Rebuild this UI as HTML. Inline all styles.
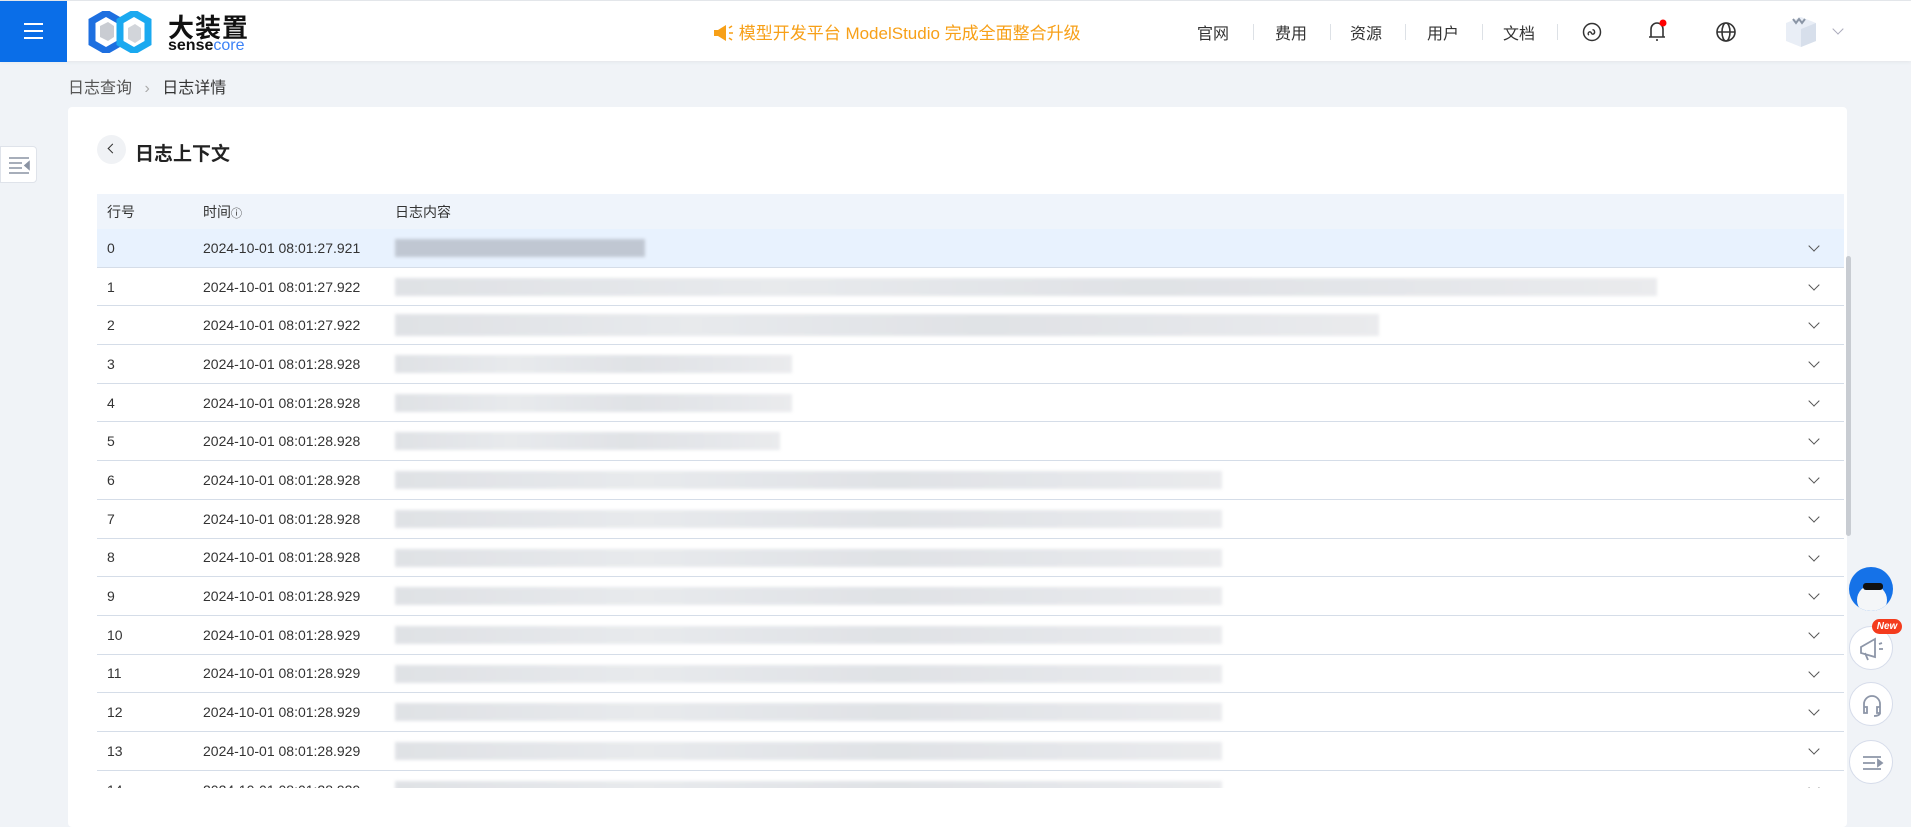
<!DOCTYPE html>
<html><head><meta charset="utf-8"><style>
*{box-sizing:border-box;margin:0;padding:0}
body{width:1911px;height:810px;overflow:hidden;background:#f0f3f7;font-family:"Liberation Sans","Noto Sans CJK SC",sans-serif;color:#333;position:relative}
.hdr{position:absolute;left:0;top:0;width:1911px;height:61px;background:#fff;box-shadow:0 1px 4px rgba(0,0,0,.06);border-top:1px solid #e3e6ea;z-index:2}
.ham{position:absolute;left:0;top:0;width:67px;height:61px;background:#0a6ee8}
.ham i{position:absolute;left:24px;width:19px;height:2px;background:#fff}
.ann{position:absolute;left:712px;top:18px;color:#f7a018;font-size:17px;white-space:nowrap}
.nav{position:absolute;top:19px;font-size:16px;color:#333}
.sep{position:absolute;top:23px;width:1px;height:16px;background:#dde1e6}
.bc{position:absolute;left:68px;top:74px;font-size:16px;color:#555}
.card{position:absolute;left:68px;top:107px;width:1779px;height:720px;background:#fff;border-radius:4px}
.side{position:absolute;left:0;top:146px;width:37px;height:37px;background:#fff;border:1px solid #dfe3ea;border-radius:0 4px 4px 0}
.wrap{position:absolute;left:97px;top:194px;width:1747px;height:594px;overflow:hidden}
.th{height:35px;background:#eff4fb;font-size:14px;color:#333;position:relative}
.row{height:38.7px;border-bottom:1px solid #d5dde8;position:relative;font-size:14px;color:#333}
.c1{position:absolute;left:10px;top:50%;transform:translateY(-50%)}
.c2{position:absolute;left:106px;top:50%;transform:translateY(-50%)}
.c3{position:absolute;left:298px;top:50%;transform:translateY(-50%)}
.bar{position:absolute;left:298px;top:10px;height:18px;background:linear-gradient(90deg,#dcdfe3,#e6e8eb 30%,#dde0e4 60%,#e8e9ec);filter:blur(1.5px);opacity:.9}
.chev{position:absolute;right:26px;top:13px;width:8px;height:8px;border-right:1.3px solid #555;border-bottom:1.3px solid #555;transform:rotate(45deg)}
.fb{position:absolute;left:1849px;width:44px;height:44px;border-radius:50%;border:1px solid #d6dcea;background:#fff}
</style></head><body>
<div class="hdr">
 <div class="ham"><i style="top:22px"></i><i style="top:29px"></i><i style="top:36px"></i></div>
 <svg style="position:absolute;left:88px;top:10px" width="64" height="42" viewBox="0 0 64 42">
  <polygon points="4,10 18,2 32,10 32,32 18,40 4,32" fill="none" stroke="#1d6fe0" stroke-width="7"/>
  <polygon points="32,10 46,2 60,10 60,32 46,40 32,32" fill="none" stroke="#1aa9f0" stroke-width="7"/>
  <polygon points="12,15 20,11 26,15 26,26 20,30 12,26" fill="#c9ccd2"/>
  <polygon points="40,17 47,13 53,17 53,28 47,32 40,28" fill="#d2d5da"/>
 </svg>
 <div style="position:absolute;left:168px;top:7px;font-size:26px;font-weight:bold;color:#111;letter-spacing:1px">大装置</div>
 <div style="position:absolute;left:168px;top:36px;font-size:16px;color:#111;font-weight:bold">sense<span style="color:#3c82f6;font-weight:normal">core</span></div>
 <div class="ann">
  <svg width="22" height="18" viewBox="0 0 22 18" style="vertical-align:-3px"><path d="M2 6h4l8-5v16l-8-5H2z" fill="#f7a018"/><path d="M17 4l3-2M17 9h4M17 14l3 2" stroke="#f7a018" stroke-width="1.6"/></svg>
  模型开发平台 ModelStudio 完成全面整合升级</div>
 <div class="nav" style="left:1197px">官网</div><div class="sep" style="left:1253px"></div>
 <div class="nav" style="left:1275px">费用</div><div class="sep" style="left:1330px"></div>
 <div class="nav" style="left:1350px">资源</div><div class="sep" style="left:1405px"></div>
 <div class="nav" style="left:1427px">用户</div><div class="sep" style="left:1482px"></div>
 <div class="nav" style="left:1503px">文档</div><div class="sep" style="left:1557px"></div>
 <svg style="position:absolute;left:1582px;top:21px" width="20" height="20" viewBox="0 0 20 20"><circle cx="10" cy="10" r="8.5" fill="none" stroke="#333" stroke-width="1.5"/><path d="M7 13c-2-1 0-4 1.5-3s1 3 3 2 1-5-1-4" fill="none" stroke="#333" stroke-width="1.4"/></svg>
 <svg style="position:absolute;left:1646px;top:17px" width="24" height="26" viewBox="0 0 24 26"><path d="M5 19V11a6 6 0 0 1 12 0v8zM3 19h16M11 21v2" fill="none" stroke="#333" stroke-width="1.6"/><circle cx="17" cy="5" r="3.5" fill="#f00"/></svg>
 <svg style="position:absolute;left:1715px;top:20px" width="22" height="22" viewBox="0 0 22 22" fill="none" stroke="#333" stroke-width="1.6"><circle cx="11" cy="11" r="9"/><ellipse cx="11" cy="11" rx="4" ry="9"/><path d="M2 11h18"/></svg>
 <svg style="position:absolute;left:1783px;top:12px" width="36" height="36" viewBox="0 0 36 36"><polygon points="18,4 33,10 33,28 18,34 3,28 3,10" fill="#e9eef6"/><polygon points="18,16 33,10 33,28 18,34" fill="#d7dfeb"/><path d="M10 6l3 4 3-4 3 4 3-4" stroke="#8a95a5" stroke-width="2" fill="none"/></svg>
 <div style="position:absolute;left:1834px;top:24px;width:8px;height:8px;border-right:1.5px solid #aab;border-bottom:1.5px solid #aab;transform:rotate(45deg)"></div>
</div>
<div class="bc">日志查询 <span style="color:#aaa;margin:0 8px">›</span> <span style="color:#333">日志详情</span></div>
<div class="side"><svg width="37" height="37" viewBox="0 0 37 37" stroke="#8a93a3" stroke-width="1.6"><path d="M8 11h20M8 16h13M8 21h13M8 26h20"/><path d="M28 15l-4 3.5 4 3.5z" fill="#8a93a3"/></svg></div>
<div class="card"></div>
<div style="position:absolute;left:97px;top:135px;width:29px;height:29px;border-radius:50%;background:#f0f2f5"></div>
<div style="position:absolute;left:109px;top:145px;width:7px;height:7px;border-left:1.5px solid #333;border-bottom:1.5px solid #333;transform:rotate(45deg)"></div>
<div style="position:absolute;left:135px;top:139px;font-size:19px;font-weight:bold;color:#222">日志上下文</div>
<div class="wrap">
 <div class="th"><span class="c1">行号</span><span class="c2">时间<span style="font-size:11px">ⓘ</span></span><span class="c3">日志内容</span></div>
 <div class="row" style="background:#e8f2fe"><span class="c1">0</span><span class="c2">2024-10-01 08:01:27.921</span><div class="bar" style="width:250px;background:#bcc3ce"></div><i class="chev"></i></div>
 <div class="row"><span class="c1">1</span><span class="c2">2024-10-01 08:01:27.922</span><div class="bar" style="width:1262px"></div><i class="chev"></i></div>
 <div class="row"><span class="c1">2</span><span class="c2">2024-10-01 08:01:27.922</span><div class="bar" style="width:984px;height:22px;top:8px"></div><i class="chev"></i></div>
 <div class="row"><span class="c1">3</span><span class="c2">2024-10-01 08:01:28.928</span><div class="bar" style="width:397px"></div><i class="chev"></i></div>
 <div class="row"><span class="c1">4</span><span class="c2">2024-10-01 08:01:28.928</span><div class="bar" style="width:397px"></div><i class="chev"></i></div>
 <div class="row"><span class="c1">5</span><span class="c2">2024-10-01 08:01:28.928</span><div class="bar" style="width:385px"></div><i class="chev"></i></div>
 <div class="row"><span class="c1">6</span><span class="c2">2024-10-01 08:01:28.928</span><div class="bar" style="width:827px"></div><i class="chev"></i></div>
 <div class="row"><span class="c1">7</span><span class="c2">2024-10-01 08:01:28.928</span><div class="bar" style="width:827px"></div><i class="chev"></i></div>
 <div class="row"><span class="c1">8</span><span class="c2">2024-10-01 08:01:28.928</span><div class="bar" style="width:827px"></div><i class="chev"></i></div>
 <div class="row"><span class="c1">9</span><span class="c2">2024-10-01 08:01:28.929</span><div class="bar" style="width:827px"></div><i class="chev"></i></div>
 <div class="row"><span class="c1">10</span><span class="c2">2024-10-01 08:01:28.929</span><div class="bar" style="width:827px"></div><i class="chev"></i></div>
 <div class="row"><span class="c1">11</span><span class="c2">2024-10-01 08:01:28.929</span><div class="bar" style="width:827px"></div><i class="chev"></i></div>
 <div class="row"><span class="c1">12</span><span class="c2">2024-10-01 08:01:28.929</span><div class="bar" style="width:827px"></div><i class="chev"></i></div>
 <div class="row"><span class="c1">13</span><span class="c2">2024-10-01 08:01:28.929</span><div class="bar" style="width:827px"></div><i class="chev"></i></div>
 <div class="row" style="border:none"><span class="c1">14</span><span class="c2">2024-10-01 08:01:28.929</span><div class="bar" style="width:827px"></div><i class="chev"></i></div>
</div>
<div style="position:absolute;left:1846px;top:256px;width:5px;height:280px;border-radius:3px;background:#c8ccd2"></div>
<div style="position:absolute;left:1849px;top:567px;width:44px;height:44px;border-radius:50%;background:#1572e8;overflow:hidden"><div style="position:absolute;left:8px;top:18px;width:30px;height:30px;border-radius:50%;background:#f4f6f8"></div><div style="position:absolute;left:14px;top:16px;width:20px;height:7px;border-radius:3px;background:#111"></div></div>
<div class="fb" style="top:626px"><svg width="44" height="44" viewBox="0 0 44 44" fill="none" stroke="#8d96a8" stroke-width="1.8"><path d="M11 20l14-8v18l-14-4zM15 26l3 7M29 17l3-1M29 22h4"/></svg></div>
<div style="position:absolute;left:1872px;top:619px;width:30px;height:15px;border-radius:8px;background:#f43b1d;color:#fff;font-size:10px;font-style:italic;font-weight:bold;text-align:center;line-height:15px">New</div>
<div class="fb" style="top:682px"><svg width="44" height="44" viewBox="0 0 44 44" fill="none" stroke="#8d96a8" stroke-width="1.8"><path d="M14 24v-3a8 8 0 0 1 16 0v3M14 24h3v6h-3zM27 24h3v6h-3zM30 30c0 2-3 3-6 3"/></svg></div>
<div class="fb" style="top:740px"><svg width="44" height="44" viewBox="0 0 44 44" fill="none" stroke="#8d96a8" stroke-width="1.8"><path d="M13 16h18M13 22h12M13 28h18"/><path d="M28 19l4 3-4 3z" fill="#8d96a8"/></svg></div>
</body></html>
